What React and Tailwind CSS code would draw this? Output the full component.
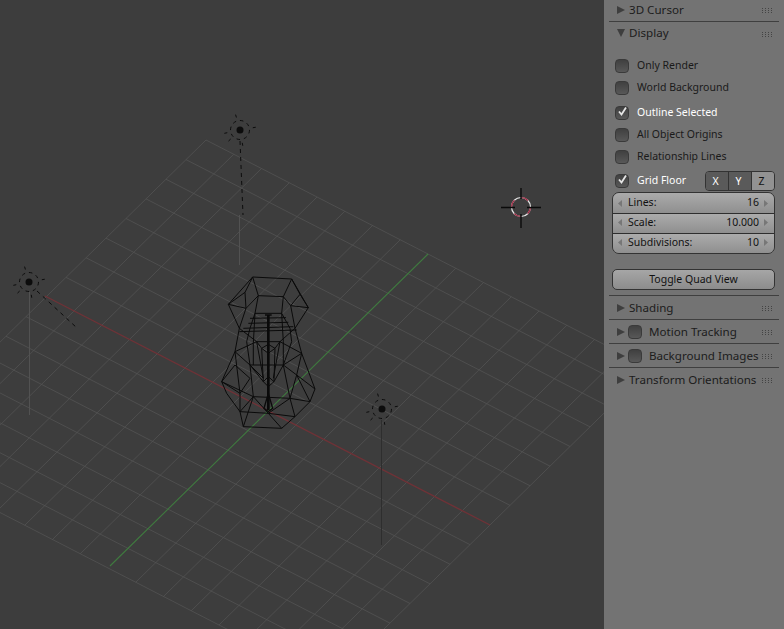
const g = [160, -157]
const r = [222, 114]
const c = [268, 411]

const pt = (a, b) => [c[0] + (g[0] * a + r[0] * b) / 8, c[1] + (g[1] * a + r[1] * b) / 8]
const ticks = [-8, -7, -6, -5, -4, -3, -2, -1, 0, 1, 2, 3, 4, 5, 6, 7, 8]
const rays = [80, 136, 168, 254, 350]

// wireframe points are in 3x crop coordinates of the mesh area
const mesh = [
  'M158 36 L275 42 L325 128 L272 122 L250 95 L175 92 L158 36 L85 118 L138 130 L175 92 M158 36 L135 82 L85 118 M135 82 L138 130 M275 42 L250 95 M275 42 L300 88 L325 128 M300 88 L272 122',
  'M85 118 L118 190 L105 260 L65 350 L80 385 L120 440 L130 485 L245 490 L285 455 L330 410 L345 372 L305 265 L285 190 L325 128',
  'M138 130 L118 190 M175 92 L165 145 L150 190 L140 230 M250 95 L245 145 L270 190 L275 230 M272 122 L285 190 M165 145 L245 145 M150 160 L258 158 M145 175 L265 172 M130 190 L280 185 M118 200 L290 195',
  'M118 190 L170 230 L240 230 L285 190 M105 260 L170 230 L185 250 M305 265 L240 230 L225 250 M105 260 L150 300 L250 300 L305 265 M140 230 L150 300 L160 395 M275 230 L250 300 L270 400',
  'M65 350 L105 300 L150 340 L120 385 L65 350 M120 385 L120 440 L160 395 M150 300 L190 340 M345 372 L290 330 L250 300 M290 330 L270 400 L330 410 M290 330 L330 410',
  'M120 440 L205 445 L285 455 M160 395 L130 485 M205 445 L245 490 M160 395 L205 445 L270 400 M285 455 L270 400 M160 395 L270 400 M65 350 L160 395',
  'M185 250 L205 238 L225 250 L205 265 Z M190 350 L205 335 L222 350 L205 365 Z M185 250 L190 350 M225 250 L222 350',
  'M165 145 L160 235 L160 300 M245 145 L250 230 L250 300 M170 230 L190 340 M240 230 L220 340 M150 300 L190 350 M250 300 L222 350 M105 260 L120 385 M305 265 L290 330',
]

function Lamp({ x, y }) {
  return (
    <g fill="none" stroke="#0c0c0c">
      <circle cx={x} cy={y} r="3.5" fill="#0c0c0c" stroke="none" />
      <circle cx={x} cy={y} r="9.5" strokeDasharray="3.5 3.9" />
      {rays.map((a) => {
        const s = Math.sin((a * Math.PI) / 180)
        const k = Math.cos((a * Math.PI) / 180)
        return <line key={a} x1={x + k * 13} y1={y + s * 13} x2={x + k * 16} y2={y + s * 16} />
      })}
    </g>
  )
}

function Scene() {
  return (
    <svg width="604" height="629" viewBox="0 0 604 629" className="block">
      <g stroke="#535353" strokeWidth="0.8" fill="none">
        {ticks.map((t) => {
          if (t === 0) return null
          const a = pt(t, -8)
          const b = pt(t, 8)
          const d = pt(-8, t)
          const e = pt(8, t)
          return (
            <g key={t}>
              <line x1={a[0]} y1={a[1]} x2={b[0]} y2={b[1]} />
              <line x1={d[0]} y1={d[1]} x2={e[0]} y2={e[1]} />
            </g>
          )
        })}
      </g>
      <line x1="45" y1="296" x2="490" y2="525" stroke="#6f3237" strokeWidth="1.4" />
      <line x1="428" y1="254" x2="110" y2="566" stroke="#3f7a3f" strokeWidth="1.1" />

      <g strokeWidth="1">
        <line x1="239.5" y1="215" x2="239.5" y2="265" stroke="#525252" />
        <line x1="29.5" y1="292" x2="29.5" y2="415" stroke="#525252" />
        <line x1="381.5" y1="420" x2="381.5" y2="545" stroke="#2e2e2e" />
      </g>
      <g stroke="#0c0c0c" strokeDasharray="4 4" fill="none">
        <line x1="240" y1="141" x2="243" y2="215" />
        <line x1="37" y1="291" x2="77" y2="328" />
      </g>
      <Lamp x={240} y={130} />
      <Lamp x={29} y={282} />
      <Lamp x={382} y={409} />

      <g transform="translate(200 265) scale(0.3333)" fill="none" stroke="#0a0a0a" strokeWidth="3">
        {mesh.map((d) => (
          <path key={d} d={d} />
        ))}
        <path d="M205 150 L205 435" strokeWidth="8" />
        <path d="M195 150 L215 150 M205 385 L192 430 L205 440 L218 430 Z" strokeWidth="4" />
      </g>

      <g fill="none">
        <circle cx="521" cy="207" r="9.5" stroke="#e8e8e8" strokeWidth="1.2" />
        <circle cx="521" cy="207" r="9.5" stroke="#a0243f" strokeWidth="1.2" strokeDasharray="7.5 7.4" />
        <path d="M521 188 V199 M521 214 V228 M501 207.5 H515 M527 207.5 H541" stroke="#0a0a0a" strokeWidth="1.4" />
      </g>
    </svg>
  )
}

function Grip() {
  return (
    <svg width="11" height="6" className="shrink-0 mr-[6px] mt-[3px]" fill="#444">
      {[0, 3, 6, 9].map((x) => (
        <g key={x}>
          <rect x={x} y="0" width="1" height="1" />
          <rect x={x} y="2" width="1" height="1" />
          <rect x={x} y="4" width="1" height="1" />
        </g>
      ))}
    </svg>
  )
}

function Check({ on }) {
  return (
    <span className="relative w-[14px] h-[14px] shrink-0 rounded-[4px] border border-[#3a3a3a] bg-gradient-to-b from-[#404040] to-[#585858]">
      {on && (
        <svg width="14" height="14" className="absolute -left-px -top-[2px]" fill="none">
          <path d="M4 6.5 L6.5 9.5 L11 2.5" stroke="#e6e6e6" strokeWidth="1.8" />
        </svg>
      )}
    </span>
  )
}

function Header({ label, open, check, className = 'h-[23px]' }) {
  return (
    <div className={`flex items-center pl-[13px] pr-[5px] ${className}`}>
      <svg width="9" height="10" className="shrink-0" fill="#3e3e3e">
        {open ? <polygon points="0,1 8,1 4,9" /> : <polygon points="0,1 8,5 0,9" />}
      </svg>
      {check ? (
        <span className="ml-[2px] mr-[6px] flex">
          <Check />
        </span>
      ) : (
        <span className="w-[3px]" />
      )}
      <span className={`flex-1 text-[11.6px] text-[#1c1c1c] whitespace-nowrap ${check ? 'ml-[1px]' : ''}`}>{label}</span>
      <Grip />
    </div>
  )
}

function Sep() {
  return <div className="mx-[5px] h-px bg-[#3f3f3f] shrink-0" />
}

function Option({ label, on, white }) {
  return (
    <div className="h-[22px] flex items-center pl-[11px]">
      <Check on={on} />
      <span className={`ml-[8px] text-[10.5px] ${white ? 'text-white' : 'text-[#1a1a1a]'}`}>{label}</span>
    </div>
  )
}

function NumRow({ label, value, border }) {
  return (
    <div className={`h-[20px] flex items-center px-[5px] bg-gradient-to-b from-[#ababab] to-[#8f8f8f] text-[10.5px] text-[#111] ${border ? 'border-t border-[#2e2e2e] pb-[2px]' : ''}`}>
      <svg width="5" height="7" fill="#777" className="shrink-0">
        <polygon points="4,0 4,7 0,3.5" />
      </svg>
      <span className="ml-[5px] flex-1">{label}</span>
      <span className="mr-[5px]">{value}</span>
      <svg width="5" height="7" fill="#777" className="shrink-0">
        <polygon points="0,0 0,7 4,3.5" />
      </svg>
    </div>
  )
}

export default function App() {
  return (
    <div className="w-[784px] h-[629px] flex overflow-hidden bg-[#3d3d3d] font-['Noto_Sans',sans-serif]">
      <div className="w-[604px] h-full shrink-0">
        <Scene />
      </div>
      <div className="w-[180px] shrink-0 h-full bg-[#737373] flex flex-col">
        <Header label="3D Cursor" className="h-[21px] pb-[2px]" />
        <Sep />
        <Header label="Display" open className="h-[22px]" />
        <div className="h-[11px]" />
        <Option label="Only Render" />
        <Option label="World Background" />
        <div className="h-[3px]" />
        <Option label="Outline Selected" on white />
        <Option label="All Object Origins" />
        <Option label="Relationship Lines" />
        <div className="h-[2px]" />
        <div className="h-[22px] flex items-center pl-[11px] pr-[9px]">
          <Check on />
          <span className="ml-[8px] flex-1 text-[10.5px] text-white">Grid Floor</span>
          <div className="flex w-[70px] h-[20px] rounded-[4px] border border-[#333] overflow-hidden text-[10.5px] text-center leading-[18px]">
            <span className="flex-1 pr-[3px] bg-[#5a5a5a] text-white border-r border-[#333]">X</span>
            <span className="flex-1 pr-[3px] bg-[#5a5a5a] text-white border-r border-[#333]">Y</span>
            <span className="flex-1 pr-[3px] bg-[#929292] text-[#111]">Z</span>
          </div>
        </div>
        <div className="ml-[8px] mr-[9px] rounded-[7px] border border-[#333] overflow-hidden">
          <NumRow label="Lines:" value="16" />
          <NumRow label="Scale:" value="10.000" border />
          <NumRow label="Subdivisions:" value="10" border />
        </div>
        <button className="mt-[15px] ml-[8px] mr-[9px] h-[21px] rounded-[5px] border border-[#333] bg-gradient-to-b from-[#a6a6a6] to-[#8c8c8c] text-[10.5px] text-[#111]">
          Toggle Quad View
        </button>
        <div className="h-[5px]" />
        <Sep />
        <Header label="Shading" />
        <Sep />
        <Header label="Motion Tracking" check />
        <Sep />
        <Header label="Background Images" check />
        <Sep />
        <Header label="Transform Orientations" />
      </div>
    </div>
  )
}
